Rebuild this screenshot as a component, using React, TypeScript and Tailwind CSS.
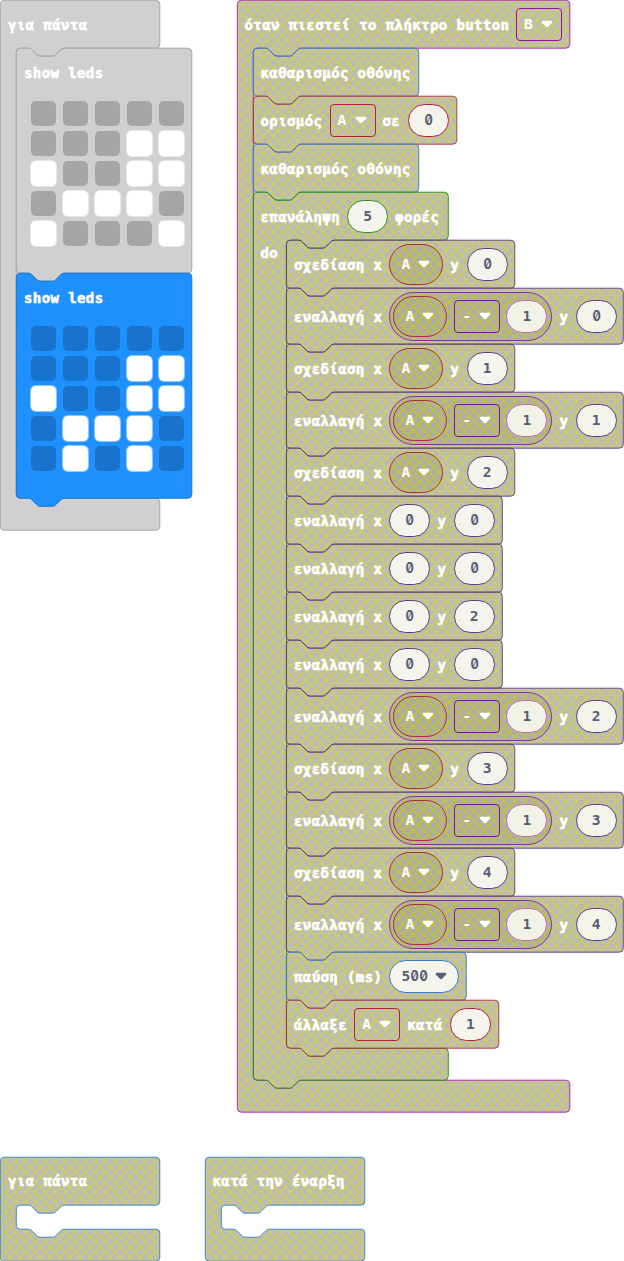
import type { ReactNode } from "react";

type Tone = "event" | "basic" | "vars" | "loops" | "led" | "math" | "ghost" | "solid";

const STROKE: Record<Tone, string> = {
  event: "#aa00aa",
  basic: "#1873cc",
  vars: "#b01030",
  loops: "#008800",
  led: "#4a2474",
  math: "#7600a8",
  ghost: "#a5a5a5",
  solid: "#1873cc",
};

const BORDER: Record<Tone, string> = {
  event: "border-[#9a109a]",
  basic: "border-[#2f80c8]",
  vars: "border-[#b3203a]",
  loops: "border-[#279327]",
  led: "border-[#5c3a85]",
  math: "border-[#7a12a6]",
  ghost: "border-[#a5a5a5]",
  solid: "border-[#1873cc]",
};

const NOTCH = "c2 0 3 1 4 2 l4 4 c1 1 2 2 4 2 h12 c2 0 3 -1 4 -2 l4 -4 c1 -1 2 -2 4 -2";
const NOTCH_BACK = "c-2 0 -3 1 -4 2 l-4 4 c-1 1 -2 2 -4 2 h-12 c-2 0 -3 -1 -4 -2 l-4 -4 c-1 -1 -2 -2 -4 -2";

function rowPath(w: number, h: number) {
  return `M0 4 a4 4 0 0 1 4 -4 h8 ${NOTCH} H${w - 4} a4 4 0 0 1 4 4 V${h - 4} a4 4 0 0 1 -4 4 H48 ${NOTCH_BACK} H4 a4 4 0 0 1 -4 -4 z`;
}

function wrapPath(w: number, inner: number, inset: number, chained: boolean) {
  const end = 48 + inner;
  const top = chained ? `h8 ${NOTCH}` : "";
  const bottom = chained ? `H48 ${NOTCH_BACK}` : "";
  return `M0 4 a4 4 0 0 1 4 -4 ${top} H${w - 4} a4 4 0 0 1 4 4 V44 a4 4 0 0 1 -4 4 H${inset + 48} ${NOTCH_BACK} h-8 a4 4 0 0 0 -4 4 V${end - 4} a4 4 0 0 0 4 4 h8 ${NOTCH} H${w - 4} a4 4 0 0 1 4 4 V${end + 28} a4 4 0 0 1 -4 4 ${bottom} H4 a4 4 0 0 1 -4 -4 z`;
}

function Outline({ d, tone }: { d: string; tone: Tone }) {
  const fill = tone === "solid" ? "#1e90ff" : tone === "ghost" ? "#d0d0d0" : "url(#hatch)";
  const faded = tone !== "solid" && tone !== "ghost";
  return (
    <svg className="absolute left-0 top-0 h-px w-px overflow-visible" aria-hidden="true">
      <path d={d} transform="translate(.3 .2)" fill={fill} fillOpacity={faded ? 0.8 : 1} stroke={STROKE[tone]} strokeOpacity={faded ? 0.8 : 1} />
    </svg>
  );
}

function Row({ w, h = 48, tone, children }: { w: number; h?: number; tone: Tone; children: ReactNode }) {
  return (
    <div className="relative" style={{ width: w, height: h }}>
      <Outline d={rowPath(w, h)} tone={tone} />
      <div className="relative flex h-full items-center gap-2 pl-2 whitespace-nowrap">{children}</div>
    </div>
  );
}

function Wrap({ w, inner, wide = false, tone, header, label, children }: {
  w: number; inner: number; wide?: boolean; tone: Tone; header: ReactNode; label?: string; children?: ReactNode;
}) {
  return (
    <div className="relative" style={{ width: w }}>
      <Outline d={wrapPath(w, inner, wide ? 33.5 : 16, wide)} tone={tone} />
      <div className="relative flex h-12 items-center gap-2 pl-2 whitespace-nowrap">{header}</div>
      <div className="relative flex" style={{ height: inner }}>
        <div className={wide ? "w-[33.5px] shrink-0 pl-2 pt-[2px]" : "w-4 shrink-0"}>{label && <Text>{label}</Text>}</div>
        <div>{children}</div>
      </div>
      <div className="h-8" />
    </div>
  );
}

function Text({ children }: { children: string }) {
  return (
    <span
      className="block h-5 shrink-0 pt-px text-[14px] leading-5 font-bold tracking-[0.4px] whitespace-nowrap text-white [-webkit-text-stroke:0.6px_white]"
      style={{ width: children.length * 8.8 - 0.6 }}
    >
      {children}
    </span>
  );
}

function Caret({ dark = false }: { dark?: boolean }) {
  return (
    <svg width="12" height="8" viewBox="0 0 12 8" className={dark ? "text-[#575e75]" : "text-white"}>
      <path d="M2 .7h8c1.3 0 1.8 1.200 1 2L7.100 6.700c-.6.6-1.600.6-2.200 0L1 2.700C.2 1.900.7.7 2 .7z" fill="currentColor" />
    </svg>
  );
}

function Digits({ value }: { value: string }) {
  return (
    <span className="flex text-[14.6px] leading-5 font-bold text-[#575e75]">
      {value.split("").map((c, i) =>
        c === "0" ? (
          <span key={i} className="w-[8.8px] text-center font-['Inter'] text-[14px] [font-feature-settings:'zero'] [transform:scaleX(.88)]">
            {c}
          </span>
        ) : (
          <span key={i} className="w-[8.8px] text-center">{c}</span>
        ),
      )}
    </span>
  );
}

function Num({ value, tone }: { value: string; tone: Tone }) {
  return (
    <span className={`flex h-[33px] w-[41px] -mr-px shrink-0 items-center justify-center rounded-[16.5px] border bg-white/82 ${BORDER[tone]}`}>
      <Digits value={value} />
    </span>
  );
}

function Drop({ value, tone }: { value: string; tone: Tone }) {
  return (
    <span className={`flex h-[33px] w-[46px] -mr-px shrink-0 items-center rounded-[4px] border pl-[7px] text-[14.6px] font-bold text-white ${BORDER[tone]}`}>
      <span className="w-[17px]">{value}</span>
      <Caret />
    </span>
  );
}

function VarPill() {
  return (
    <span className="relative -mr-px flex h-[41px] w-[54px] shrink-0 items-center pl-3 text-[14.6px] font-bold text-white">
      <svg className="absolute inset-0 h-[41px] w-[54px]" aria-hidden="true">
        <rect x=".5" y=".5" width="53" height="40" rx="20" fill="url(#hatch)" fillOpacity=".8" stroke="#b01030" strokeOpacity=".85" />
      </svg>
      <span className="relative w-[17px]">A</span>
      <span className="relative"><Caret /></span>
    </span>
  );
}

function Minus() {
  return (
    <span className="relative -mr-px flex h-[49px] w-[163px] shrink-0 items-center gap-2 pl-1">
      <svg className="absolute inset-0 h-[49px] w-[163px]" aria-hidden="true">
        <rect x=".5" y=".5" width="162" height="48" rx="24" fill="url(#hatch)" fillOpacity=".8" stroke="#7600a8" strokeOpacity=".75" />
      </svg>
      <VarPill />
      <span className="relative"><Drop value="-" tone="math" /></span>
      <span className="relative -ml-px flex h-[33px] w-[41px] items-center justify-center rounded-[16.5px] border border-[#b56fc0] bg-white/82">
        <Digits value="1" />
      </span>
    </span>
  );
}

function Plot({ y }: { y: string }) {
  return (
    <Row w={228.5} tone="led">
      <Text>σχεδίαση x</Text>
      <VarPill />
      <Text>y</Text>
      <Num value={y} tone="led" />
    </Row>
  );
}

function ToggleMinus({ y }: { y: string }) {
  return (
    <Row w={337} h={56} tone="led">
      <Text>εναλλαγή x</Text>
      <Minus />
      <Text>y</Text>
      <Num value={y} tone="led" />
    </Row>
  );
}

function Toggle({ x, y }: { x: string; y: string }) {
  return (
    <Row w={216} tone="led">
      <Text>εναλλαγή x</Text>
      <Num value={x} tone="led" />
      <Text>y</Text>
      <Num value={y} tone="led" />
    </Row>
  );
}

function ShowLeds({ rows, tone }: { rows: string[]; tone: "ghost" | "solid" }) {
  return (
    <div className="relative h-[225px] w-44">
      <Outline d={rowPath(175.5, 225)} tone={tone} />
      <div className="relative pl-2 pt-[14px]">
        <Text>show leds</Text>
        <div className="ml-[7px] mt-[19px] grid w-fit grid-cols-5 gap-x-[7px] gap-y-[5px]">
          {rows.join("").split("").map((c, i) => (
            <span
              key={i}
              className={`size-[25px] rounded-[5px] ${c === "#" ? "bg-white shadow-[0_0_0_1px_rgba(255,255,255,0.5)]" : tone === "solid" ? "bg-[#1873cc]" : "bg-[#a5a5a5]"}`}
            />
          ))}
        </div>
      </div>
    </div>
  );
}

export default function App() {
  return (
    <div className="h-[1261px] w-[624px] overflow-hidden bg-white font-['DejaVu_Sans_Mono',monospace]">
      <svg className="absolute h-0 w-0" aria-hidden="true">
        <defs>
          <pattern id="hatch" patternUnits="userSpaceOnUse" width="10" height="10">
            <rect width="10" height="10" fill="#aaa" />
            <path d="M-1 -1L11 11M11 -1L-1 11M9 -1L11 1M-1 9L1 11M-1 1L1 -1M9 11L11 9" stroke="#cc0" strokeWidth="1.1" />
          </pattern>
        </defs>
      </svg>

      <div className="flex h-[1157px] items-start">
        <div className="w-[236.5px] shrink-0">
          <Wrap w={159.5} inner={450} tone="ghost" header={<Text>για πάντα</Text>}>
            <ShowLeds tone="ghost" rows={[".....", "...##", "#..##", ".###.", "#...#"]} />
            <ShowLeds tone="solid" rows={[".....", "...##", "#..##", ".###.", ".#.#."]} />
          </Wrap>
        </div>

        <Wrap
          w={332.500}
          inner={1032}
          tone="event"
          header={<><Text>όταν πιεστεί το πλήκτρο button</Text><Drop value="B" tone="event" /></>}
        >
          <Row w={165.500} tone="basic"><Text>καθαρισμός οθόνης</Text></Row>
          <Row w={203.500} tone="vars">
            <Text>ορισμός</Text>
            <Drop value="A" tone="vars" />
            <Text>σε</Text>
            <Num value="0" tone="vars" />
          </Row>
          <Row w={165.500} tone="basic"><Text>καθαρισμός οθόνης</Text></Row>
          <Wrap
            w={195}
            inner={808}
            wide
            tone="loops"
            label="do"
            header={<><Text>επανάληψη</Text><Num value="5" tone="loops" /><Text>φορές</Text></>}
          >
            <Plot y="0" />
            <ToggleMinus y="0" />
            <Plot y="1" />
            <ToggleMinus y="1" />
            <Plot y="2" />
            <Toggle x="0" y="0" />
            <Toggle x="0" y="0" />
            <Toggle x="0" y="2" />
            <Toggle x="0" y="0" />
            <ToggleMinus y="2" />
            <Plot y="3" />
            <ToggleMinus y="3" />
            <Plot y="4" />
            <ToggleMinus y="4" />
            <Row w={180} tone="basic">
              <Text>παύση (ms)</Text>
              <span className="flex h-[33px] w-[70px] items-center gap-[7px] rounded-full border border-[#2f80c8] bg-white/82 pl-[11px]">
                <Digits value="500" />
                <Caret dark />
              </span>
            </Row>
            <Row w={212.500} tone="vars">
              <Text>άλλαξε</Text>
              <Drop value="A" tone="vars" />
              <Text>κατά</Text>
              <Num value="1" tone="vars" />
            </Row>
          </Wrap>
        </Wrap>
      </div>

      <div className="flex items-start gap-[45px]">
        <Wrap w={159.5} inner={24} tone="basic" header={<div className="pb-[2px]"><Text>για πάντα</Text></div>} />
        <Wrap w={159.5} inner={24} tone="basic" header={<div className="pb-[2px]"><Text>κατά την έναρξη</Text></div>} />
      </div>
    </div>
  );
}
